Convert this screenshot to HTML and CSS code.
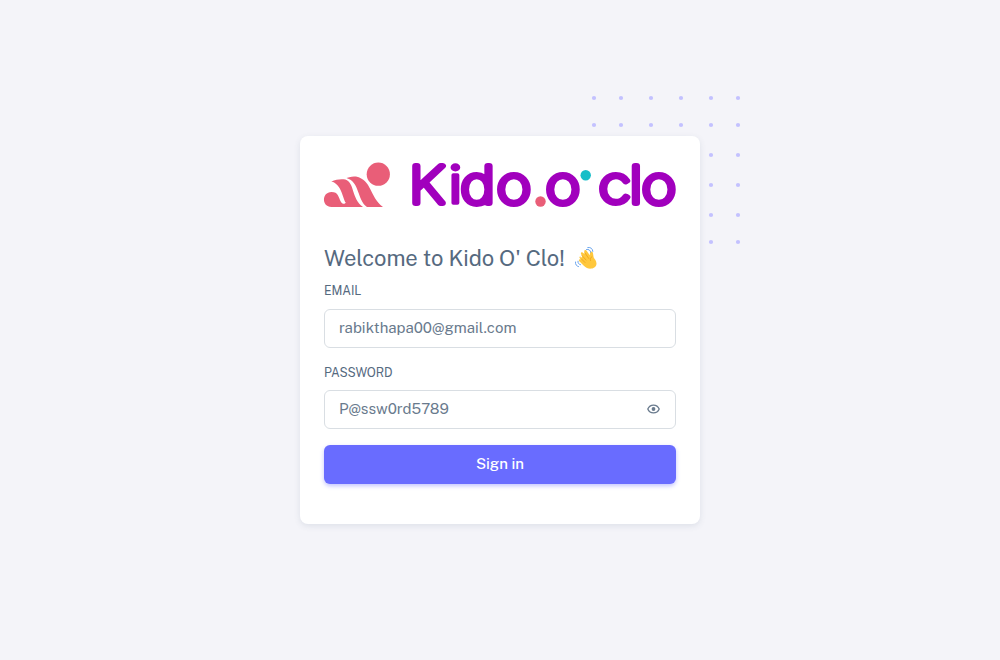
FILE: index.html
```html
<!DOCTYPE html>
<html lang="en">
<head>
<meta charset="utf-8">
<title>Sign in - Kido O' Clo</title>
<link rel="stylesheet" href="styles.css">
</head>
<body>
<main class="login">
  <svg class="dots" width="150" height="150" viewBox="0 0 150 150" aria-hidden="true">
    <defs><g id="row"><circle cx="3" r="2.1"/><circle cx="30" r="2.1"/><circle cx="60" r="2.1"/><circle cx="90" r="2.1"/><circle cx="120" r="2.1"/><circle cx="147" r="2.1"/></g></defs>
    <use href="#row" y="3"/><use href="#row" y="30"/><use href="#row" y="60"/><use href="#row" y="90"/><use href="#row" y="120"/><use href="#row" y="147"/>
  </svg>
  <section class="card">
    <svg class="logo" width="352" height="48" viewBox="0 0 352 48">
      <g class="baby">
        <circle cx="54.3" cy="14.2" r="11.6"/>
        <path d="M7.500 47C-2.500 47-2.500 32 7.500 32c7 0 6.500 4.500 9.500 10 1.500 2.500 4 2 4.800.5C19 40 18 24 7.300 21.500c5-2.300 10-2.700 14-2C31 23 27 38 39 47z"/>
        <path d="M22.500 18c4-1.500 7-1.600 9.500-1.600C48 20 45 36 59 47H43C33 40 36 22 22.500 18z"/>
        <circle cx="216.500" cy="41.500" r="5.200"/>
      </g>
      <circle class="teal" cx="261.700" cy="15.200" r="5.200"/>
      <g class="wordmark" transform="scale(1.16 1)">
        <text y="43.300" x="73.200 107.400 117.600 148.900">K<tspan class="wordmark-i">i</tspan>do</text>
        <text y="43.300" x="191.100">o</text>
        <text y="43.300" x="236.800 263.300 273.900">clo</text>
      </g>
    </svg>
    <h1 class="title"><span class="title-text">Welcome to Kido O' Clo!</span>
      <svg class="wave" width="24" height="24" viewBox="0 0 24 24" aria-label="waving hand">
        <path class="hand" d="M6.800 12 8.300 10.500 7 8c-.6-1.600 1.200-2.500 2.200-1.100L10.500 8l-.3-3c.3-1.500 2-1.300 2.600 0l3 4.200.3-3c.8-1.500 2.700-.7 2.900 1l.6 4c1 2 2.900 3.500 2.900 6.300 0 2.800-2.200 4.800-5 5.100-3 .3-5.300-.5-7.700-2.900l-4.500-4.500c-1-1.300.5-2.400 1.700-1.600l-1.200-1.300c-1-1.200.1-2.300 1-1.300z"/>
        <path class="fingers" d="m8 9.500 4 4.500M11 7l3.800 5.500M7.500 13l3.500 3.500M18 10.500c-1.500 1-2 2.500-1.500 4"/>
        <path class="motion" d="M12.500 3.500c2.200-.5 3.800.6 4.200 2.700M13.800 1.500c3.200-.5 4.800 1.300 5 3.900M4 15.200c-.4 1.800.6 3 2.500 3.500M1.500 16c-.3 2.500.9 4 3 4.600"/>
      </svg>
    </h1>
    <form class="form">
      <label class="label label-email" for="email">EMAIL</label>
      <div class="field"><input class="input input-email" id="email" type="text" value="rabikthapa00@gmail.com"></div>
      <label class="label label-password" for="password">PASSWORD</label>
      <div class="field"><input class="input input-password" id="password" type="text" value="P@ssw0rd5789">
        <svg class="eye" width="13" height="10" viewBox="0 0 13 10" aria-hidden="true"><path d="M.8 5C3-.2 10-.2 12.200 5 10 10.200 3 10.200.8 5z"/><circle cx="6.500" cy="5" r="1.900"/></svg>
      </div>
      <button class="button" type="button"><span>Sign in</span></button>
    </form>
  </section>
</main>
</body>
</html>
```
FILE: styles.css
```css
* { box-sizing: border-box; }
body {
  margin: 0;
  min-height: 100vh;
  display: grid;
  place-items: center;
  background: #f4f4f9;
  color: #566a7f;
  font-family: "Public Sans", Inter, "Liberation Sans", sans-serif;
}
.login { position: relative; width: 400px; }
.dots { position: absolute; top: -41px; right: -41px; fill: #c3c1ff; }
.card {
  position: relative;
  height: 388px;
  padding: 24px;
  border-radius: 8px;
  background: #fff;
  box-shadow: 0 2px 6px rgba(67, 89, 113, .12);
}
.logo { display: block; overflow: visible; }
.baby { fill: #e95e78; }
.teal { fill: #16bec8; }
.wordmark {
  font-family: Inter, sans-serif;
  font-size: 51px;
  font-weight: 100;
  fill: #a100bd;
  stroke: #a100bd;
  stroke-width: 6;
  stroke-linejoin: round;
}
.wordmark-i { font-weight: 300; stroke-width: 3.4; }
.title {
  display: flex;
  align-items: center;
  gap: 9px;
  height: 28px;
  margin: 36px 0 12px;
  font-size: 22px;
  font-weight: 400;
  white-space: nowrap;
}
.title-text { letter-spacing: -.1px; }
.wave { flex: none; }
.hand { fill: #ffc83d; }
.fingers { fill: none; stroke: #e99b16; stroke-width: .7; stroke-linecap: round; }
.motion { fill: none; stroke: #6aa5ed; stroke-width: 1; stroke-linecap: round; }
.form { display: flex; flex-direction: column; }
.label { height: 14px; font-size: 12.300px; line-height: 14px; letter-spacing: -.13px; }
.label-email { margin-bottom: 11px; }
.label-password { margin: 18px 0 10px; }
.field {
  display: flex;
  align-items: center;
  height: 39px;
  padding: 0 15px 1px 14px;
  border: 1px solid #d9dee3;
  border-radius: 6px;
}
.input {
  flex: 1;
  min-width: 0;
  padding: 0;
  border: 0;
  outline: 0;
  background: none;
  color: #697a8d;
  font: 400 15px/22px "Public Sans", Inter, sans-serif;
}
.eye { fill: none; stroke: #697a8d; stroke-width: 1.3; }
.eye circle { fill: #697a8d; stroke: none; }
.button {
  height: 39px;
  margin-top: 16px;
  padding: 0 6px 2px;
  border: 0;
  border-radius: 6px;
  background: #696cff;
  color: #fff;
  font: 500 15px/22px "Public Sans", Inter, sans-serif;
  box-shadow: 0 2px 4px rgba(105, 108, 255, .4);
}
```
